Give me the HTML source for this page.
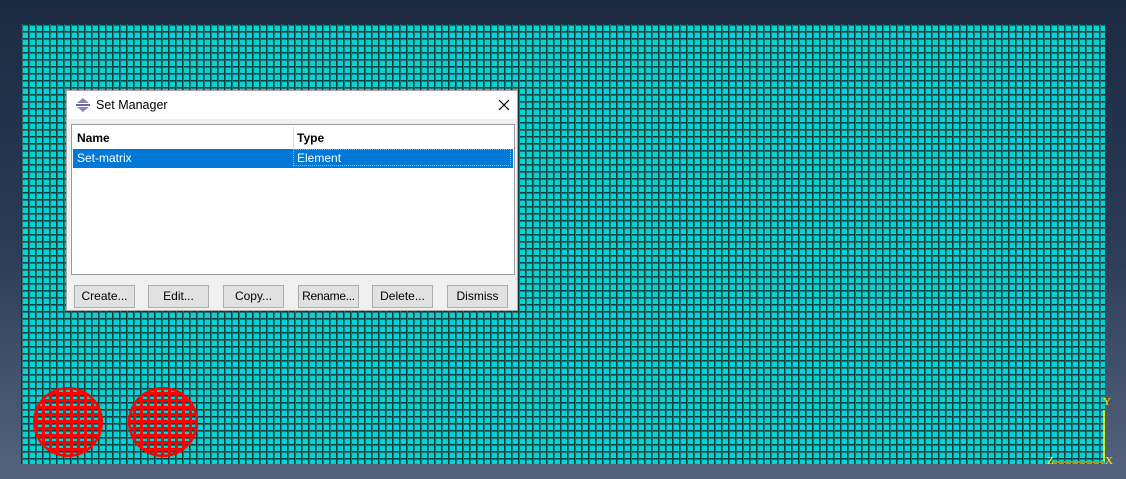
<!DOCTYPE html>
<html><head><style>
html,body{margin:0;padding:0}
body{width:1126px;height:479px;overflow:hidden;position:relative;background:linear-gradient(#1d2a42 0%,#2c3a55 50%,#55637d 100%);font-family:"Liberation Sans",sans-serif;font-size:12px}
.mesh{position:absolute;left:21px;top:24px;width:1084px;height:440px;background-color:#00d4d4;
background-image:linear-gradient(90deg,#0b3a3c 0 1px,#2a7070 1px 2px,transparent 2px),linear-gradient(#0b3a3c 0 1px,#2a7070 1px 2px,transparent 2px);
background-size:7px 7px}
.dlg{position:absolute;left:66px;top:90px;width:452px;height:221px;background:#f0f0f0;border:1px solid #aaa;box-sizing:border-box}
.tb{height:28px;background:#fff;position:relative}
.tb span{position:absolute;left:29px;top:7px;font-size:12.5px;color:#000}
.list{position:absolute;left:4px;top:33px;width:444px;height:151px;background:#fff;border:1px solid #999;box-sizing:border-box}
.hd{position:absolute;top:2px;left:2px;width:438px;height:20px;font-weight:bold}
.hd div{position:absolute;top:4px}
.sel{position:absolute;top:24px;left:1px;width:440px;height:19px;background:#0078d7;color:#fff}
.sel div{position:absolute;top:0;height:17px;line-height:17px}
.btn{position:absolute;top:194px;height:23px;width:61px;border:1px solid #adadad;background:#e1e1e1;box-sizing:border-box;text-align:center;line-height:21px;font-size:12px;white-space:nowrap}
</style></head><body>
<div class="mesh"></div>
<svg style="position:absolute;left:0;top:0" width="1126" height="479">
<defs>
<pattern id="rp" x="0" y="0" width="7" height="7" patternUnits="userSpaceOnUse"><rect x="0" y="0" width="7" height="3" fill="#ff0000"/><rect x="0" y="0" width="3" height="7" fill="#ff0000"/></pattern>
<clipPath id="c1"><circle cx="68" cy="422" r="35"/></clipPath>
<clipPath id="c2"><circle cx="163" cy="422" r="35"/></clipPath>
</defs>
<g clip-path="url(#c1)"><rect x="30" y="384" width="80" height="80" fill="url(#rp)"/><circle cx="68" cy="422" r="34" fill="none" stroke="#f00" stroke-width="3"/></g>
<g clip-path="url(#c2)"><rect x="125" y="384" width="80" height="80" fill="url(#rp)"/><circle cx="163" cy="422" r="34" fill="none" stroke="#f00" stroke-width="3"/></g>
<line x1="1104" y1="410" x2="1104" y2="462" stroke="#ffff00" stroke-width="1.5"/>
<line x1="1052" y1="462" x2="1104" y2="462" stroke="#9a9a20" stroke-width="2"/>
<text x="1103" y="405" fill="#ffff00" font-size="11" font-family="Liberation Serif">Y</text>
<text x="1105" y="464" fill="#ffff00" font-size="11" font-family="Liberation Serif">X</text>
<text x="1047" y="464" fill="#ffff00" font-size="11" font-family="Liberation Serif">Z</text>
</svg>
<div class="dlg">
<div class="tb">
<svg style="position:absolute;left:8px;top:6px" width="16" height="16"><path d="M8 1 L14 6 H2 Z" fill="#8a86b8"/><rect x="1" y="7" width="14" height="2" fill="#6b6898"/><path d="M8 15 L14 10 H2 Z" fill="#8a86b8"/></svg>
<span>Set Manager</span>
<svg style="position:absolute;left:431px;top:8px" width="12" height="12"><path d="M1 1L11 11M11 1L1 11" stroke="#000" stroke-width="1.2"/></svg>
</div>
<div class="list">
<div class="hd"><div style="left:3px">Name</div><div style="left:223px">Type</div></div>
<div style="position:absolute;left:221px;top:2px;width:1px;height:40px;background:#ddd"></div>
<div class="sel"><div style="left:4px;top:1px">Set-matrix</div><div style="left:220px;border:1px dotted #f0a040;width:218px;padding-left:3px;box-sizing:border-box">Element</div></div>
</div>
<div class="btn" style="left:7px">Create...</div>
<div class="btn" style="left:81px">Edit...</div>
<div class="btn" style="left:156px">Copy...</div>
<div class="btn" style="left:231px;letter-spacing:-0.3px">Rename...</div>
<div class="btn" style="left:305px">Delete...</div>
<div class="btn" style="left:380px">Dismiss</div>
</div>
</body></html>
